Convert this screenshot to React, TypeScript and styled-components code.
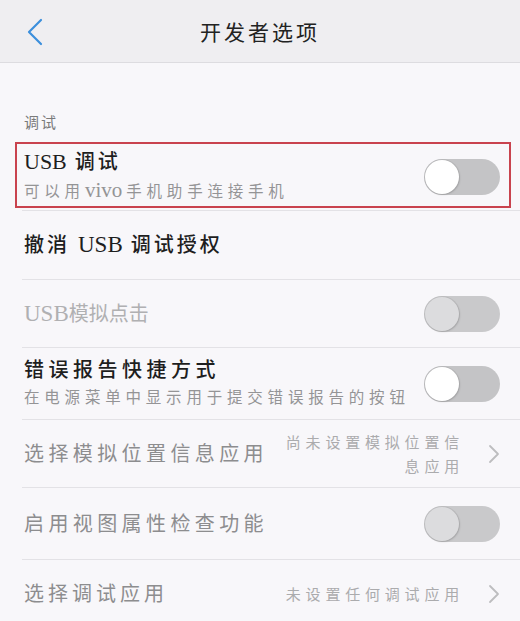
import React from "react";
import styled, { createGlobalStyle, css } from "styled-components";

const Global = createGlobalStyle`
  html, body { margin: 0; padding: 0; background: #f8f7fa; }
  body { font-family: "Liberation Serif", "Noto Sans CJK SC", serif; }
`;

const Page = styled.div`
  width: 520px;
  height: 621px;
  overflow: hidden;
  background: #f8f7fa;
  display: flex;
  flex-direction: column;
`;

const Header = styled.header`
  height: 62px;
  flex: none;
  background: #efeef1;
  border-bottom: 1px solid #dddce0;
  display: grid;
  grid-template-columns: 60px 1fr 60px;
  align-items: center;
`;

const BackButton = styled.div`
  display: flex;
  align-items: center;
  padding-left: 26px;
  padding-top: 2px;
`;

const Title = styled.h1`
  margin: 0;
  text-align: center;
  font-size: 21px;
  font-weight: 400;
  letter-spacing: 3px;
  color: #222;
  font-family: "Noto Sans CJK SC", sans-serif;
`;

const SectionLabel = styled.div`
  padding: 49px 0 0 24px;
  height: 32px;
  line-height: 20px;
  font-size: 15px;
  color: #7a7a7a;
  letter-spacing: 2px;
  font-family: "Noto Sans CJK SC", sans-serif;
`;

const List = styled.div`
  display: flex;
  flex-direction: column;
  padding-top: 11px;
`;

const Row = styled.div<{ $height: number; $highlight?: boolean }>`
  position: relative;
  margin-left: 22px;
  padding: 0 20px 0 2px;
  min-height: ${(p) => p.$height}px;
  border-bottom: 1px solid #e3e2e6;
  display: flex;
  align-items: center;
  justify-content: space-between;
  gap: 12px;
  flex: none;
  ${(p) =>
    p.$highlight &&
    css`
      &::after {
        content: "";
        position: absolute;
        left: -7px;
        right: 9px;
        top: -1px;
        bottom: 2px;
        border: 2px solid #c9434e;
        pointer-events: none;
      }
    `}
`;

const TextBlock = styled.div`
  display: flex;
  flex-direction: column;
  min-width: 0;
`;

const ItemTitle = styled.div<{ $tone?: "normal" | "muted" | "faint"; $spacing?: number }>`
  font-size: 20px;
  line-height: 28px;
  letter-spacing: ${(p) => (p.$spacing ?? 3)}px;
  white-space: nowrap;
  color: ${(p) =>
    p.$tone === "faint" ? "#b0b0b2" : p.$tone === "muted" ? "#8d8d8f" : "#1e1e1e"};
  font-weight: ${(p) => (p.$tone === "normal" || !p.$tone ? 500 : 400)};
`;

const ItemSub = styled.div`
  font-size: 15.5px;
  line-height: 28px;
  letter-spacing: 4.8px;
  color: #949496;
  white-space: nowrap;
`;

const Latin = styled.span<{ $size: number; $gap?: number }>`
  font-family: "Liberation Serif", serif;
  font-size: ${(p) => p.$size}px;
  font-weight: 400;
  letter-spacing: 0;
  margin-right: ${(p) => p.$gap ?? 0}px;
`;

const Trailing = styled.div`
  display: flex;
  align-items: center;
  gap: 24px;
  flex: none;
`;

const ValueText = styled.div`
  max-width: 182px;
  text-align: right;
  font-size: 15px;
  line-height: 24px;
  letter-spacing: 4.8px;
  color: #ababad;
  font-family: "Noto Sans CJK SC", sans-serif;
`;

const Track = styled.div<{ $disabled?: boolean }>`
  width: 76px;
  height: 36px;
  border-radius: 18px;
  background: ${(p) => (p.$disabled ? "#c9c9cb" : "#c4c4c6")};
  display: flex;
  align-items: center;
  padding-left: 1px;
  box-sizing: border-box;
  flex: none;
`;

const Knob = styled.div<{ $disabled?: boolean }>`
  width: 34px;
  height: 34px;
  border-radius: 50%;
  background: ${(p) => (p.$disabled ? "#dcdcde" : "#ffffff")};
  box-shadow: 0 0 0 1px rgba(0, 0, 0, 0.06), 1px 1px 2px rgba(0, 0, 0, 0.12);
`;

const Toggle = ({ disabled }: { disabled?: boolean }) => (
  <Track $disabled={disabled}>
    <Knob $disabled={disabled} />
  </Track>
);

const Chevron = () => (
  <svg width="12" height="20" viewBox="0 0 12 20">
    <path d="M2 2 L10 10 L2 18" fill="none" stroke="#bdbdbf" strokeWidth="1.8" strokeLinecap="round" strokeLinejoin="round" />
  </svg>
);

export default function App() {
  return (
    <>
      <Global />
      <Page>
        <Header>
          <BackButton>
            <svg width="18" height="28" viewBox="0 0 18 28">
              <path d="M15 2 L3 14 L15 26" fill="none" stroke="#3c8fdc" strokeWidth="2.2" strokeLinecap="round" strokeLinejoin="round" />
            </svg>
          </BackButton>
          <Title>开发者选项</Title>
          <div />
        </Header>
        <SectionLabel>调试</SectionLabel>
        <List>
          <Row $height={67} $highlight>
            <TextBlock>
              <ItemTitle>
                <Latin $size={22} $gap={8}>USB</Latin>调试
              </ItemTitle>
              <ItemSub>
                可以用<Latin $size={21} $gap={4}>vivo</Latin>手机助手连接手机
              </ItemSub>
            </TextBlock>
            <Toggle />
          </Row>
          <Row $height={68}>
            <ItemTitle>
              撤消 <Latin $size={23} $gap={8}>USB</Latin>调试授权
            </ItemTitle>
          </Row>
          <Row $height={67}>
            <ItemTitle $tone="faint" $spacing={0}>
              <Latin $size={23}>USB</Latin>模拟点击
            </ItemTitle>
            <Toggle disabled />
          </Row>
          <Row $height={71}>
            <TextBlock>
              <ItemTitle $spacing={4.5}>错误报告快捷方式</ItemTitle>
              <ItemSub>在电源菜单中显示用于提交错误报告的按钮</ItemSub>
            </TextBlock>
            <Toggle />
          </Row>
          <Row $height={67}>
            <ItemTitle $tone="muted" $spacing={4.4}>选择模拟位置信息应用</ItemTitle>
            <Trailing>
              <ValueText>尚未设置模拟位置信息应用</ValueText>
              <Chevron />
            </Trailing>
          </Row>
          <Row $height={71}>
            <ItemTitle $tone="muted" $spacing={4.4}>启用视图属性检查功能</ItemTitle>
            <Toggle disabled />
          </Row>
          <Row $height={67}>
            <ItemTitle $tone="muted" $spacing={4}>选择调试应用</ItemTitle>
            <Trailing>
              <ValueText>未设置任何调试应用</ValueText>
              <Chevron />
            </Trailing>
          </Row>
        </List>
      </Page>
    </>
  );
}
